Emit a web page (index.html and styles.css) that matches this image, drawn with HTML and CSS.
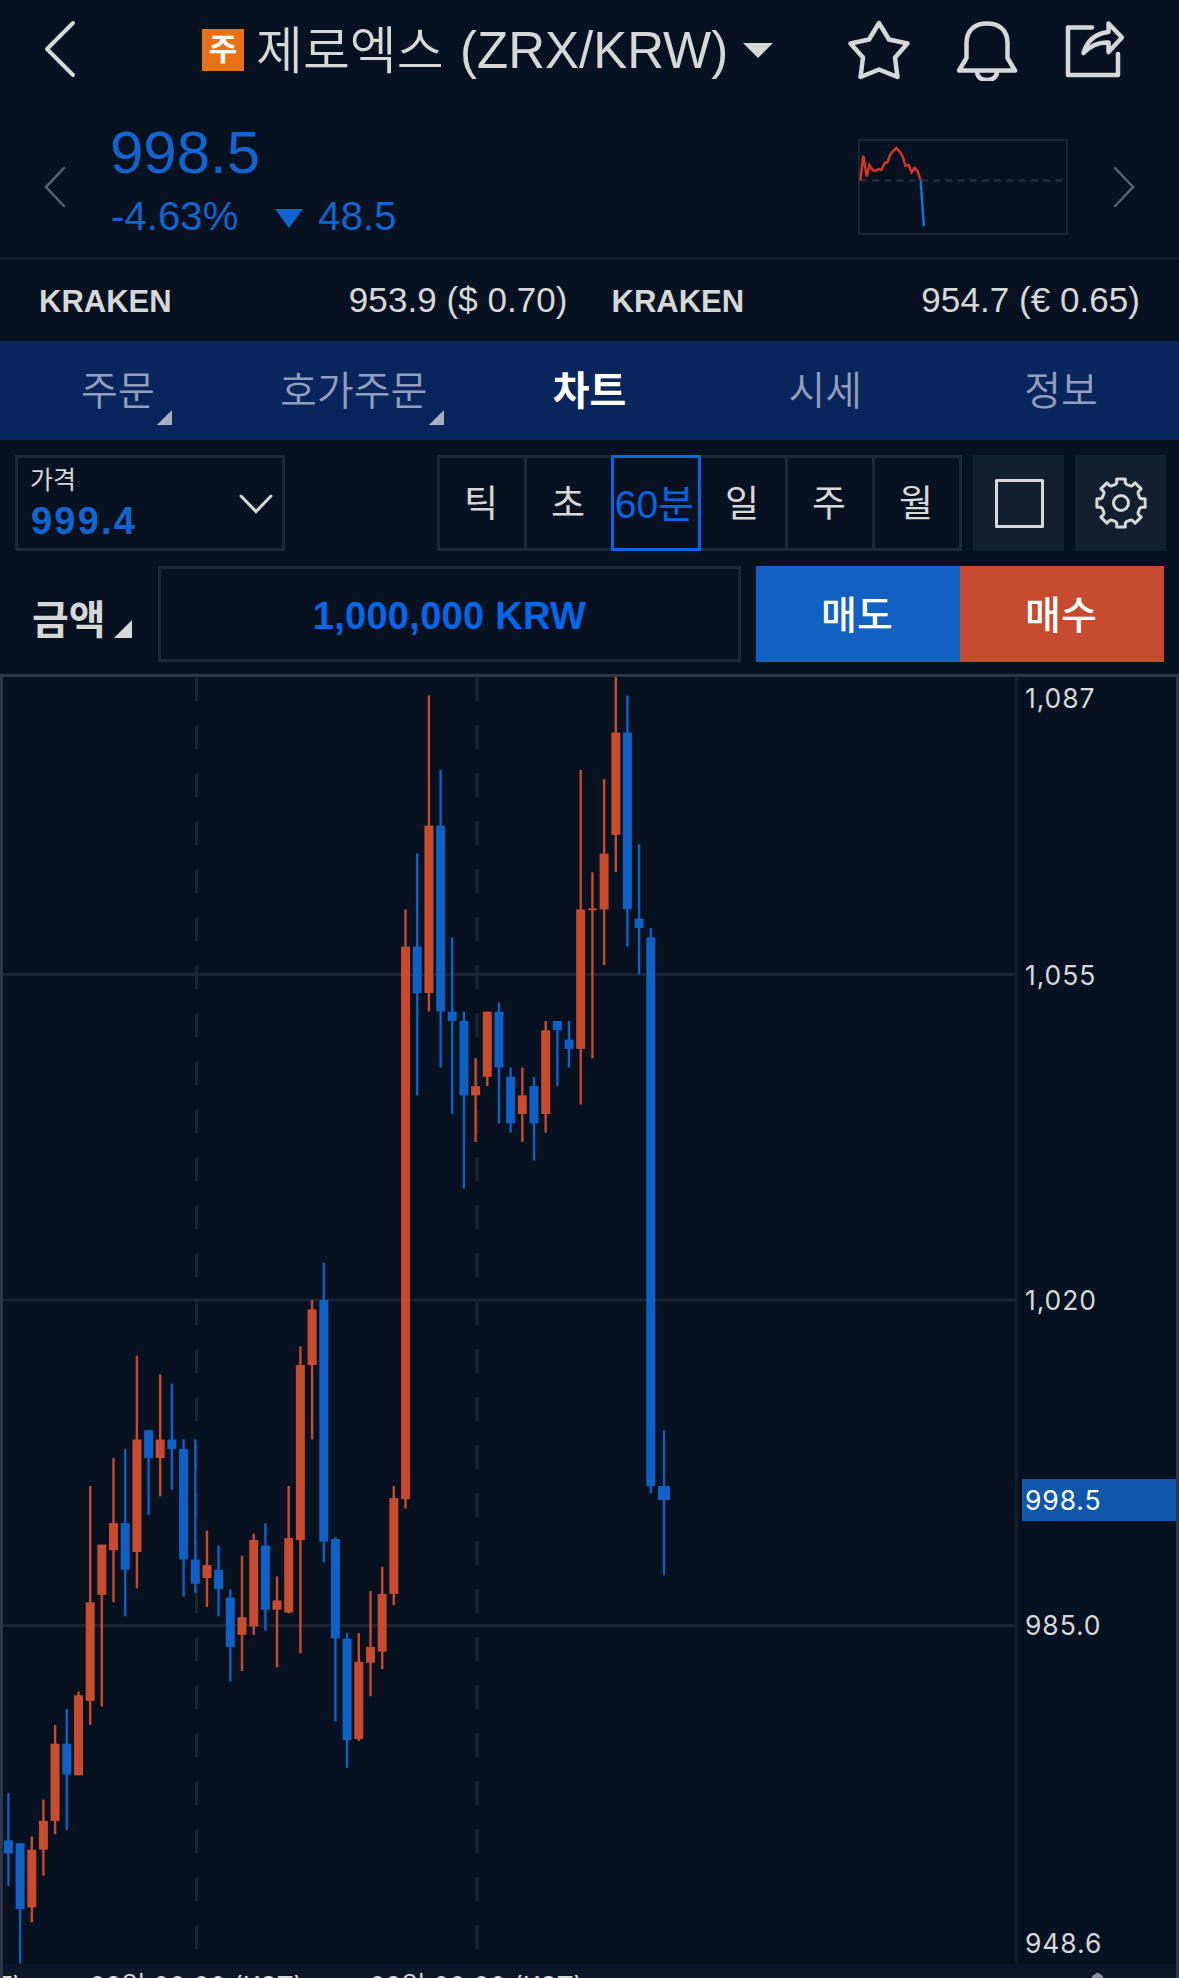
FILE: index.html
```html
<!DOCTYPE html>
<html lang="ko">
<head>
<meta charset="utf-8">
<title>제로엑스 (ZRX/KRW)</title>
<link rel="stylesheet" href="styles.css">
</head>
<body>
<div class="app">
  <header class="topbar">
    <svg class="back" width="34" height="60" viewBox="0 0 34 60"><path d="M31 4 5 30 31 56"/></svg>
    <div class="title">
      <span class="badge">주</span>
      <h1><span class="name">제로엑스</span><span class="pair">(ZRX/KRW)</span></h1>
      <svg class="caret" width="30" height="15" viewBox="0 0 30 15"><path d="M0 0h30L15 15z"/></svg>
    </div>
    <div class="actions">
      <svg width="64" height="64" viewBox="0 0 64 64"><path d="M32 6 42 22.500 60.500 26.500 48 40.500 50.500 60 32 52.500 13.500 60 16 40.500 3.500 26.500 22 22.500z"/></svg>
      <svg width="64" height="64" viewBox="0 0 64 64"><path d="M11.500 41V26C11.500 13 20 6.500 32 6.500S52.500 13 52.500 26V41L60 53.500H4z"/><path d="M22 54c0 6 4 9 10 9s10-3 10-9"/></svg>
      <svg width="64" height="64" viewBox="0 0 64 64"><path d="M29 10.500H5V58H55V37"/><path d="M20.500 36C24 24 32 16.500 45.500 15V6.500L59 20.500 45.500 35V25.500C35 25 27 29 20.500 36z"/></svg>
    </div>
  </header>

  <section class="quote">
    <svg class="step" width="24" height="44" viewBox="0 0 24 44"><path d="M21 3 3 22 21 41"/></svg>
    <div class="price">
      <div class="last">998.5</div>
      <div class="change"><span>-4.63%</span><svg width="28" height="19" viewBox="0 0 28 19"><path d="M0 0h28L14 19z"/></svg><span>48.5</span></div>
    </div>
    <svg class="spark" width="210" height="96" viewBox="859 139 210 96">
      <rect x="860" y="140" width="208" height="94"/>
      <path class="base" d="M861 180.500H1067"/>
      <path class="up" d="M861.300 180.300 864.300 156 867.800 176.500 870.500 165 873 169.300 876 171 879.600 169 882.300 170 885.800 163 888.500 162 891.500 154 897.300 148 900.700 151.700 903.800 156.700 906.400 165.700 909.500 164.700 912.600 172.300 915.600 168 918.300 170.700 921.700 180.300"/>
      <path class="down" d="M921.700 180.300 924.800 226"/>
    </svg>
    <svg class="step next" width="24" height="44" viewBox="0 0 24 44"><path d="M3 3 21 22 3 41"/></svg>
  </section>

  <section class="abroad">
    <div><b>KRAKEN</b><span>953.9 ($ 0.70)</span></div>
    <div><b>KRAKEN</b><span>954.7 (€ 0.65)</span></div>
  </section>

  <nav class="tabs">
    <a class="more">주문</a>
    <a class="more">호가주문</a>
    <a class="on">차트</a>
    <a>시세</a>
    <a>정보</a>
  </nav>

  <section class="tools">
    <div class="select">
      <div><small>가격</small><strong>999.4</strong></div>
      <svg width="34" height="20" viewBox="0 0 34 20"><path d="M2 2 17 17.500 32 2"/></svg>
    </div>
    <div class="frames">
      <span>틱</span><span>초</span><span class="on">60분</span><span>일</span><span>주</span><span>월</span>
    </div>
    <button class="tool"><svg width="54" height="54" viewBox="0 0 54 54"><rect x="4.500" y="4.500" width="46" height="46"/></svg></button>
    <button class="tool"><svg width="54" height="54" viewBox="-27 -27 54 54"><path id="gear"/><circle r="7.500"/></svg></button>
  </section>

  <section class="order">
    <div class="amount-label">금액</div>
    <div class="amount">1,000,000 KRW</div>
    <div class="sell">매도</div>
    <div class="buy">매수</div>
  </section>

  <svg class="chart" width="1179" height="1304" viewBox="0 674 1179 1304">
    <g class="grid">
      <path d="M3 974.500H1016M3 1300H1016M3 1625.500H1016"/>
      <path class="day" d="M196.500 677V1963M477 677V1963"/>
    </g>
    <g id="candles"></g>
    <path class="axis" d="M1016.500 677V1963"/>
    <rect class="timebar" x="3" y="1963.500" width="1173" height="15"/>
    <rect class="now" x="1022" y="1479" width="154" height="42"/>
    <g class="labels">
      <text x="1025" y="707.500">1,087</text>
      <text x="1025" y="984.500">1,055</text>
      <text x="1025" y="1309.500">1,020</text>
      <text class="current" x="1025" y="1510">998.5</text>
      <text x="1025" y="1635">985.0</text>
      <text x="1025" y="1953">948.6</text>
    </g>
    <g class="times">
      <text x="22" y="1995">07일 00:00 (KST)</text>
      <text x="303" y="1995">08일 00:00 (KST)</text>
      <text x="583" y="1995">09일 00:00 (KST)</text>
    </g>
    <path class="knob" d="M1092 1978V1976L1097.500 1972.500 1103 1976V1978z"/>
    <path class="frame" d="M1.500 1978V675.500H1177.500V1978"/>
  </svg>
</div>
<script src="chart.js"></script>
</body>
</html>
```
FILE: styles.css
```css
* { box-sizing: border-box; }
body {
  margin: 0;
  background: #071120;
  color: #d6d8d8;
  font-family: "Liberation Sans", "Noto Sans CJK KR", sans-serif;
}
.app { display: flex; flex-direction: column; width: 1179px; height: 1978px; overflow: hidden; }
svg { display: block; flex: none; }

.topbar { display: flex; align-items: center; height: 98px; padding: 0 52px 0 42px; }
.back { fill: none; stroke: #d6d8d8; stroke-width: 4; stroke-linecap: round; stroke-linejoin: round; }
.title { display: flex; align-items: center; margin-left: 126px; }
.badge {
  width: 42px; height: 42px; margin-top: 2px; line-height: 42px; text-align: center;
  background: #e97114; color: #fff; font-size: 31px; font-weight: 700;
}
h1 { display: flex; margin: 0 0 0 12px; font-weight: 400; line-height: 60px; white-space: nowrap; }
.name { width: 204px; margin-top: -1px; font-size: 51px; font-family: "Noto Sans CJK KR", sans-serif; font-weight: 350; }
.pair { width: 265px; margin-top: 3px; font-size: 51px; }
.caret { margin: 3px 0 0 18px; fill: #d6d8d8; }
.actions { display: flex; gap: 44px; margin-left: auto; }
.actions svg { fill: none; stroke: #d6d8d8; stroke-width: 4.500; stroke-linejoin: round; stroke-linecap: round; }

.quote { display: flex; height: 162px; padding-left: 43px; border-bottom: 3px solid #141d2b; }
.step { margin-top: 67px; fill: none; stroke: #59616d; stroke-width: 2.500; stroke-linecap: round; }
.price { flex: 1; padding: 20px 0 0 43px; color: #1265cf; }
.last { font-size: 60px; line-height: 69px; }
.change { display: flex; align-items: center; padding-left: 1px; font-size: 40px; line-height: 58px; letter-spacing: .1px; }
.change svg { margin: 5px 15px 0 37px; fill: currentColor; }
.spark { margin-top: 41px; fill: none; stroke-width: 2.500; }
.spark rect { stroke: #1c2532; stroke-width: 2; }
.base { stroke: #263040; stroke-dasharray: 7 5.200; stroke-width: 2; }
.up { stroke: #d8342a; }
.down { stroke: #1273d8; }
.next { margin-left: 44px; margin-right: 43px; }

.abroad { display: flex; height: 81px; padding: 0 39px; gap: 44px; }
.abroad div { flex: 1; display: flex; justify-content: space-between; line-height: 79px; }
.abroad b { font-size: 31px; line-height: 84px; }
.abroad span { font-size: 35px; letter-spacing: .05px; }

.tabs { display: grid; grid-template-columns: repeat(5, 1fr); height: 99px; background: #08265c; }
.tabs a { position: relative; color: #919fbc; font-size: 40px; font-weight: 350; line-height: 100px; text-align: center; }
.tabs .on { color: #fff; font-weight: 700; }
.tabs .more::after {
  content: ""; position: absolute; top: 69px; margin-left: 2px;
  border-left: 15px solid transparent; border-bottom: 15px solid #a3aec5;
}

.tools { display: flex; height: 111px; padding: 15px 12px 0 15px; }
.select { display: flex; justify-content: space-between; width: 270px; height: 96px; border: 3px solid #1e2735; padding: 4px 9px 0 12px; }
.select div { display: flex; flex-direction: column; }
.select small { font-size: 25px; line-height: 36px; }
.select strong { padding-left: 1px; color: #1265cf; font-size: 38px; line-height: 46px; letter-spacing: 2.200px; }
.select svg { margin-top: 32px; fill: none; stroke: #d6d8d8; stroke-width: 3; stroke-linecap: round; }
.frames { display: grid; grid-template: 90px / repeat(6, 1fr); width: 525px; height: 96px; margin: 0 12px 0 152px; border: 3px solid #1e2735; border-left: 0; }
.frames span { height: 90px; border-left: 3px solid #1e2735; padding-right: 2px; font-size: 37px; line-height: 93px; text-align: center; white-space: nowrap; }
.frames .on { height: 96px; margin: -3px -3px -3px 0; padding: 0 3px 0 0; border: 3px solid #0666e6; color: #0666e6; display: flex; justify-content: center; font-size: 39px; position: relative; }
.tool { width: 91px; height: 96px; margin: 0 11px 0 -1px; padding: 0; border: 0; background: #141f2d; display: flex; align-items: center; justify-content: center; }
.tool:last-child { margin: 0; }
.tool svg { fill: none; stroke: #d6d8d8; stroke-width: 3; stroke-linejoin: round; }

.order { display: flex; height: 123px; padding: 15px 15px 12px 0; font-size: 39px; line-height: 100px; }
.amount-label { position: relative; width: 158px; padding-left: 32px; font-size: 40px; font-weight: 700; line-height: 108px; }
.amount-label::after {
  content: ""; position: absolute; left: 114px; top: 54px;
  border-left: 18px solid transparent; border-bottom: 18px solid #d6d8d8;
}
.amount { width: 583px; margin-right: 15px; border: 3px solid #1e2735; color: #0566e8; font-size: 38px; font-weight: 700; line-height: 95px; letter-spacing: .3px; text-align: center; }
.sell, .buy { flex: 1; padding-right: 2px; color: #fff; text-align: center; font-weight: 500; }
.sell { background: #1160c2; }
.buy { background: #c64a2f; }

.chart { fill: none; }
.grid { stroke: #1a232f; stroke-width: 3; }
.day { stroke-dasharray: 24 24; stroke-width: 3; }
.rise { fill: #c74b2e; }
.fall { fill: #1160c4; }
.axis { stroke: #131c2b; stroke-width: 3; }
.timebar { fill: #0d1628; }
.now { fill: #1057ab; }
.labels, .times { font-family: Inter, "Noto Sans CJK KR", sans-serif; font-size: 26.500px; letter-spacing: .9px; fill: #d6d8d8; }
.labels .current { fill: #fff; }
.times { text-anchor: end; font-size: 26px; letter-spacing: 0; }
.knob { fill: #8a8f99; }
.frame { stroke: #2c3646; stroke-width: 3; }
```
FILE: chart.js
```js
// Hourly candles: [open, high, low, close]
const candles = [
  [961.9, 967, 957, 960.5], [961.6, 961.6, 948.6, 954.5], [954.7, 962.3, 953.1, 960.9],
  [960.9, 966.3, 958.1, 964], [964, 974.3, 962.6, 972.3], [972.3, 976, 963, 969],
  [968.9, 977.9, 968.9, 977.5], [976.9, 1000, 974.3, 987.5], [988.3, 993.7, 976.3, 993.7],
  [993.1, 1003, 987.5, 996], [996, 1004, 986, 991], [992.9, 1014, 989, 1005],
  [1006, 1006, 996.9, 1003], [1003, 1012, 998.9, 1005], [1005, 1011, 999.6, 1004],
  [1004, 1005, 988.1, 992.1], [992.1, 1005, 988.5, 989.5], [990.1, 995.2, 987, 991.5],
  [991, 993.6, 986, 988.9], [988, 988.9, 979, 982.7], [984, 992.5, 980.1, 985.9],
  [984.9, 994.9, 984, 994.2], [993.6, 996, 984.4, 986.7], [986.7, 990.3, 980.5, 987.7],
  [986.4, 1000, 986.3, 994.4], [994.2, 1015, 982, 1013], [1013, 1020, 1005, 1019],
  [1020, 1024, 991.8, 994], [994.3, 994.5, 974.7, 983.6], [983.6, 984.2, 969.7, 972.7],
  [972.8, 984.2, 972.6, 981.1], [981, 988.7, 977.4, 982.7], [982.2, 991.3, 980.3, 988.4],
  [988.4, 1000, 987.2, 998.7], [998.6, 1062, 997.6, 1058], [1058, 1068, 1042, 1053],
  [1053, 1085, 1051, 1071], [1071, 1077, 1045, 1051], [1051, 1059, 1040, 1050],
  [1050, 1051, 1032, 1042], [1042, 1046, 1037, 1043], [1044, 1051, 1043, 1051],
  [1051, 1052, 1039, 1045], [1044, 1045, 1038, 1039], [1040, 1045, 1037, 1042],
  [1043, 1044, 1035, 1039], [1040, 1050, 1038, 1049], [1050, 1050, 1043, 1049],
  [1048, 1050, 1045, 1047], [1047, 1077, 1041, 1062], [1061.9, 1066, 1046, 1062.1],
  [1062, 1076, 1056, 1068], [1070, 1087, 1066, 1081], [1081, 1085, 1058, 1062],
  [1061, 1069, 1055, 1060], [1059, 1060, 999.2, 1000], [1000, 1006, 990.4, 998.5]
];
const y = price => 1300 + (1020 - price) * 9.301;
const ns = "http://www.w3.org/2000/svg";
const layer = document.getElementById("candles");
const bar = (kind, x, top, width, height) => {
  const r = document.createElementNS(ns, "rect");
  r.setAttribute("class", kind);
  r.setAttribute("x", x.toFixed(1));
  r.setAttribute("y", top.toFixed(1));
  r.setAttribute("width", width);
  r.setAttribute("height", height.toFixed(1));
  layer.appendChild(r);
};
candles.forEach(([open, high, low, close], i) => {
  const kind = close > open ? "rise" : "fall";
  const latest = i === candles.length - 1;
  const x = latest ? 664 : 8.4 + i * 11.68;
  const width = latest ? 12 : 9;
  bar(kind, x - 1.2, y(high), 2.4, y(low) - y(high));
  bar(kind, x - width / 2, y(Math.max(open, close)), width, Math.abs(y(open) - y(close)));
});

// Eight-tooth settings gear
let d = "";
for (let k = 0; k < 8; k++) {
  for (const [r, deg] of [[19.500, -16], [20.500, -12], [24.500, -10], [24.500, 10], [20.500, 12], [19.500, 16]]) {
    const a = (k * 45 + deg) * Math.PI / 180;
    d += (d ? "L" : "M") + (r * Math.sin(a)).toFixed(1) + " " + (-r * Math.cos(a)).toFixed(1);
  }
}
document.getElementById("gear").setAttribute("d", d + "z");
```
